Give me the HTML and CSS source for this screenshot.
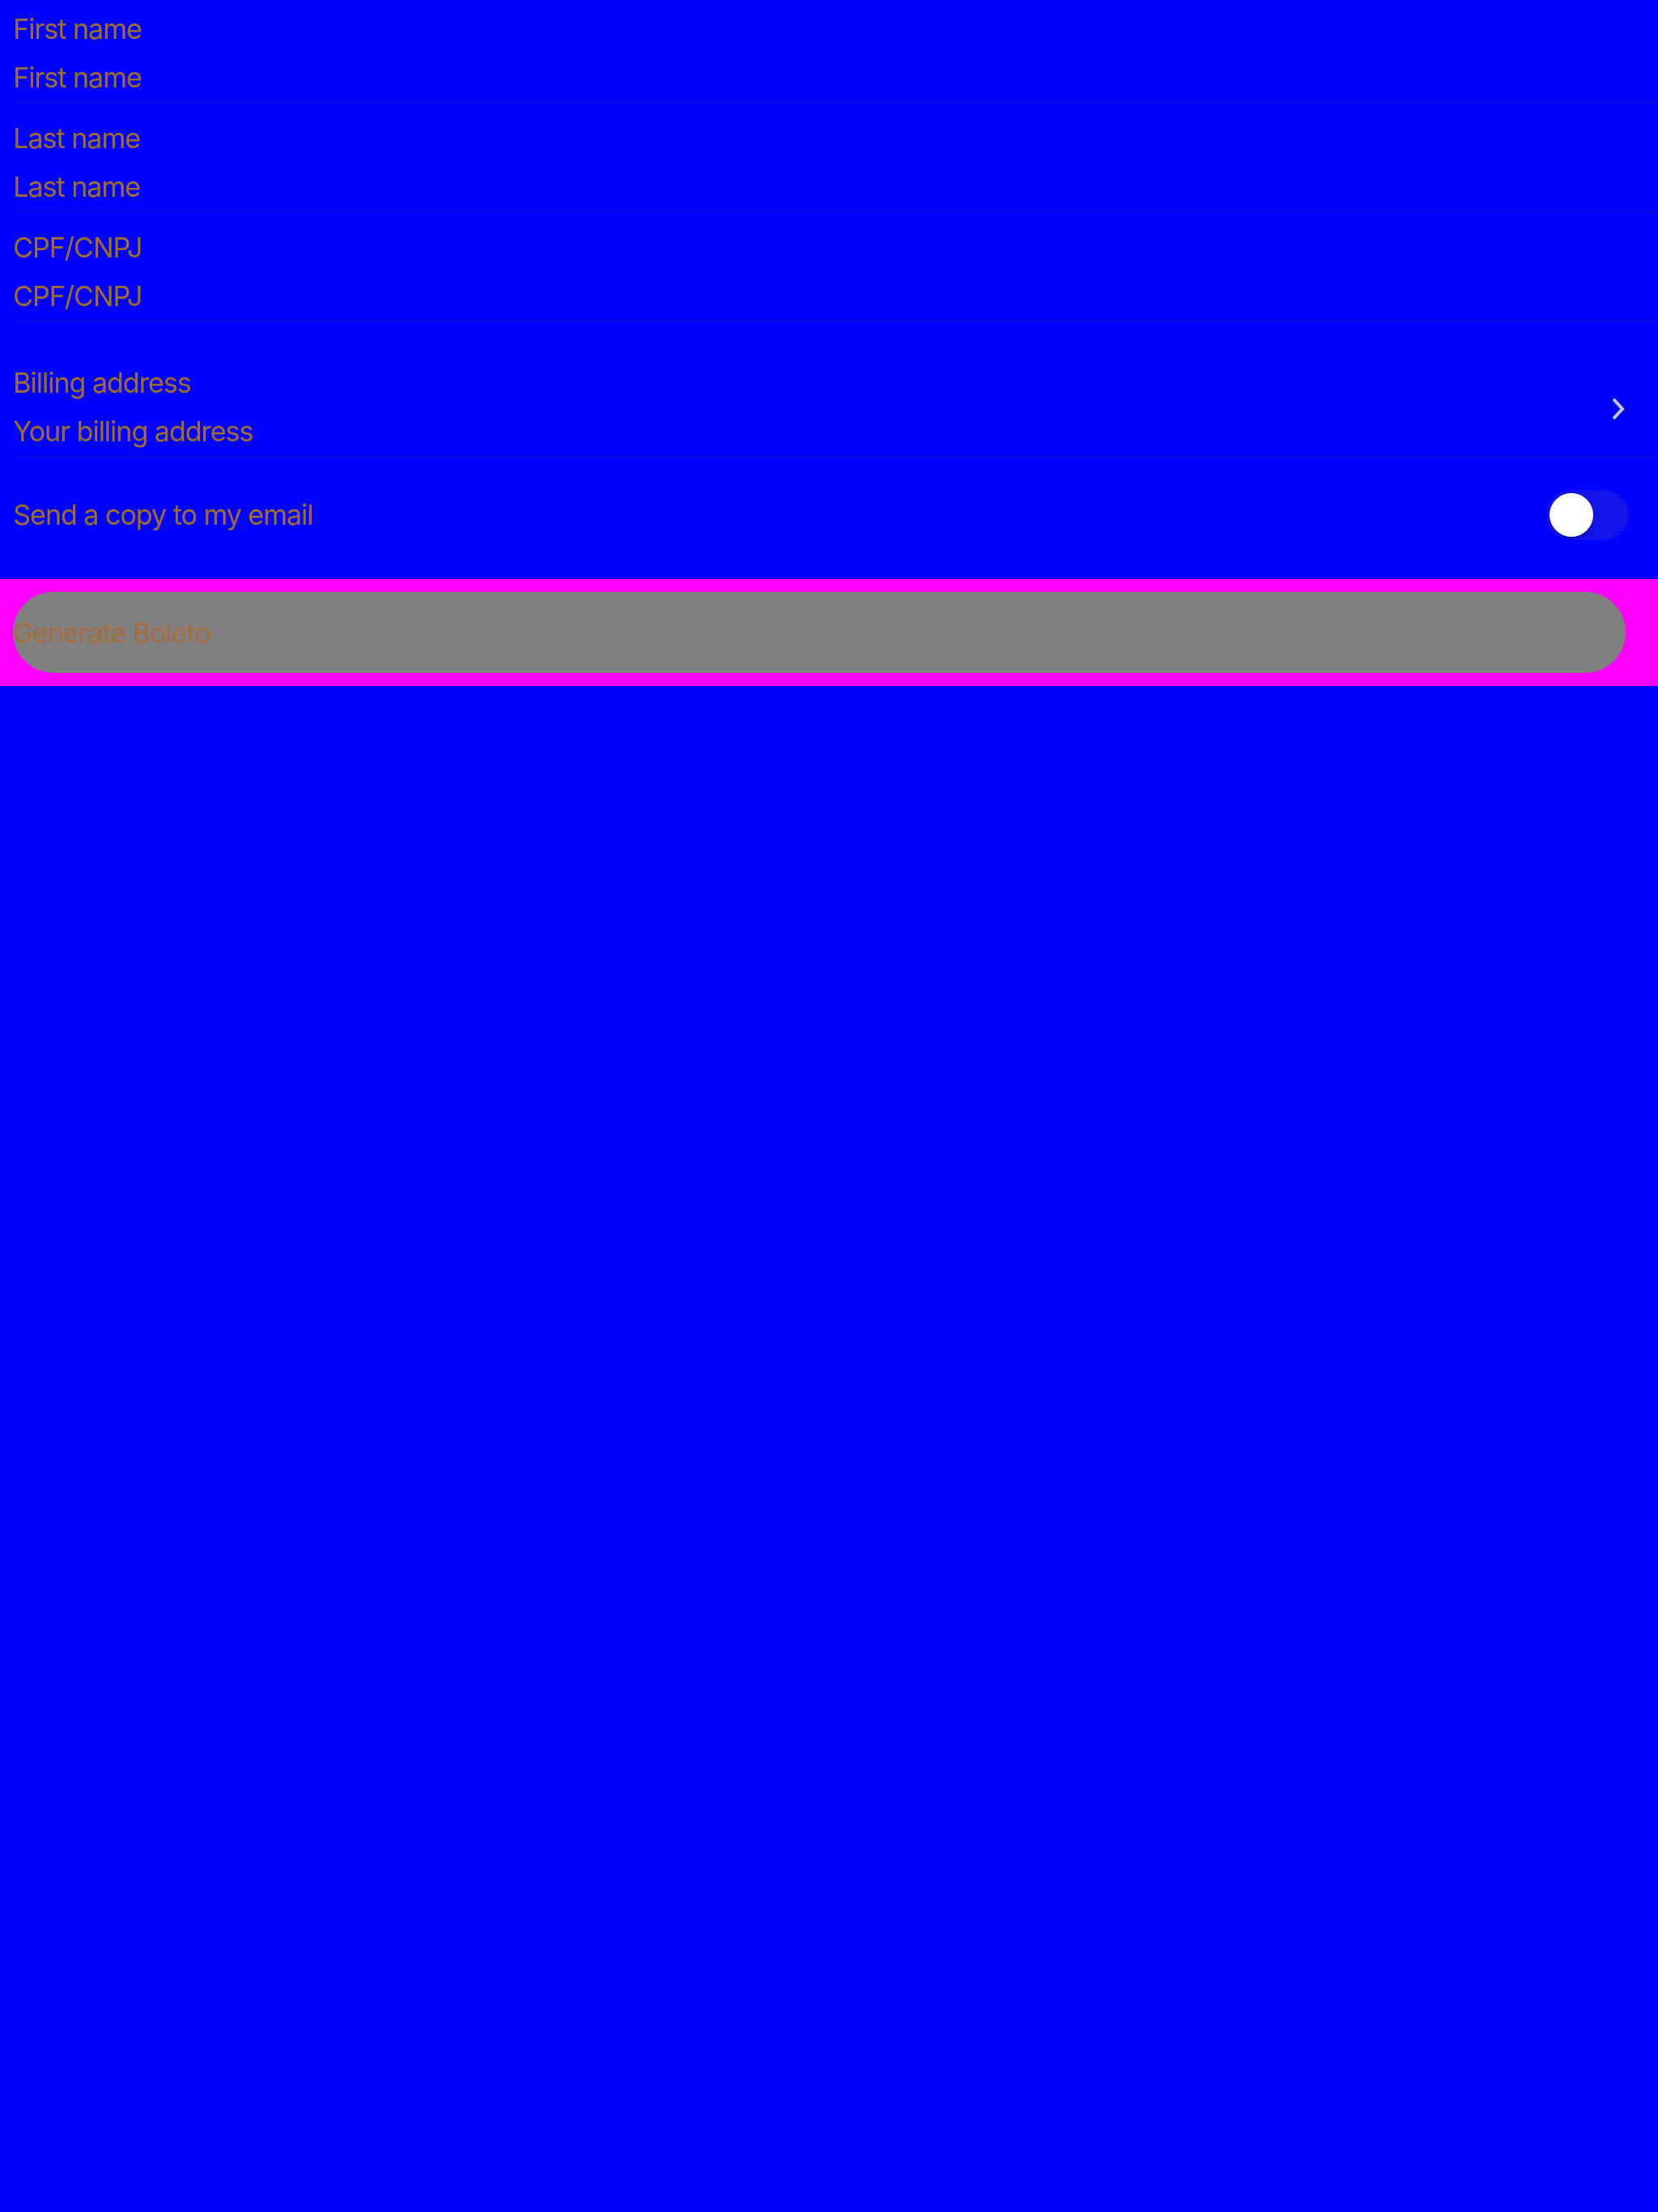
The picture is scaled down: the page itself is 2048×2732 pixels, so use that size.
FILE: index.html
```html
<!DOCTYPE html>
<html lang="en">
<head>
<meta charset="utf-8">
<title>Boleto</title>
<link rel="stylesheet" href="styles.css">
</head>
<body>
<main class="page">
  <section class="group">
    <div class="field field-first">
      <div class="field-inner">
        <div class="line label">First name</div>
        <div class="line value">First name</div>
      </div>
    </div>
    <div class="field">
      <div class="field-inner">
        <div class="line label">Last name</div>
        <div class="line value">Last name</div>
      </div>
    </div>
    <div class="field">
      <div class="field-inner">
        <div class="line label">CPF/CNPJ</div>
        <div class="line value">CPF/CNPJ</div>
      </div>
    </div>
  </section>
  <section class="group group-second">
    <div class="field">
      <div class="field-inner nav">
        <div class="texts">
          <div class="line label">Billing address</div>
          <div class="line value">Your billing address</div>
        </div>
        <svg class="chevron" width="18" height="30" viewBox="0 0 18 30" aria-hidden="true">
          <path d="M3 3 L14 15 L3 27" fill="none" stroke="#c4c4c6" stroke-width="4" stroke-linecap="butt" stroke-linejoin="miter"/>
        </svg>
      </div>
    </div>
    <div class="switch-row">
      <div class="line">Send a copy to my email</div>
      <div class="switch"><span class="knob"></span></div>
    </div>
  </section>
  <footer class="action-bar">
    <button class="primary" type="button">Generate Boleto</button>
  </footer>
</main>
</body>
</html>
```

FILE: styles.css
```css
html, body {
  margin: 0;
  padding: 0;
  background: #0000ff;
}
body {
  width: 2048px;
  height: 2732px;
  font-family: "Inter", "Roboto", "Liberation Sans", sans-serif;
  font-size: 34px;
  color: #9d6a30;
  letter-spacing: -1px;
}
.page {
  display: flex;
  flex-direction: column;
}
.group {
  display: flex;
  flex-direction: column;
}
.group-second {
  margin-top: 32px;
}
.field {
  padding-left: 16px;
}
.field-inner {
  padding-top: 14px;
  border-bottom: 1px solid #1111c8;
}
.field-first .field-inner {
  padding-top: 6px;
}
.line {
  height: 60px;
  line-height: 60px;
  white-space: nowrap;
}
.nav {
  display: flex;
  align-items: flex-start;
  justify-content: space-between;
  padding-right: 40px;
}
.chevron {
  display: block;
  margin-top: 47px;
}
.switch-row {
  display: flex;
  align-items: center;
  justify-content: space-between;
  height: 144px;
  padding-left: 16px;
  padding-right: 36px;
  margin-bottom: 7px;
}
.switch {
  position: relative;
  width: 102px;
  height: 62px;
  border-radius: 31px;
  background: #1313ea;
}
.knob {
  position: absolute;
  left: 4px;
  top: 4px;
  width: 54px;
  height: 54px;
  border-radius: 50%;
  background: #ffffff;
  box-shadow: 0 3px 8px rgba(0, 0, 0, 0.15), 0 3px 1px rgba(0, 0, 0, 0.06);
}
.action-bar {
  background: #ff00ff;
  padding: 16px 40px 16px 16px;
}
.primary {
  display: block;
  width: 100%;
  height: 100px;
  border: 0;
  border-radius: 50px;
  background: #808080;
  padding: 0;
  margin: 0;
  text-align: left;
  font-family: inherit;
  font-size: 34px;
  letter-spacing: -1px;
  color: #a56d3c;
  cursor: pointer;
}
```
